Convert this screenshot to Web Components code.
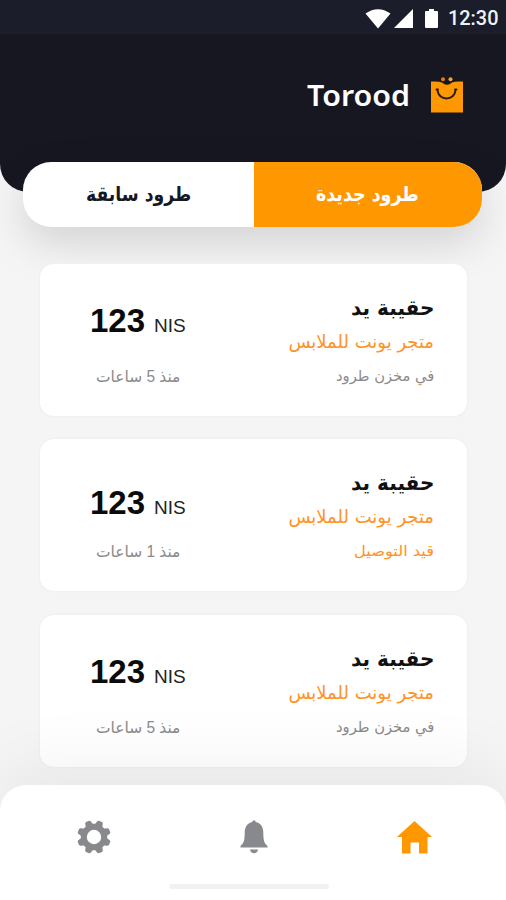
<!DOCTYPE html>
<html lang="ar">
<head>
<meta charset="utf-8">
<meta name="viewport" content="width=device-width, initial-scale=1">
<title>Torood</title>
<style>
  body {
    margin: 0;
    font-family: "DejaVu Sans", "Liberation Sans", sans-serif;
    background: #f5f5f5;
  }
</style>
</head>
<body>
<torood-app></torood-app>
<script>
// One line of text, stretched or squeezed to the width in its attribute
class FitText extends HTMLElement {
  connectedCallback() {
    const rtl = this.getAttribute('dir') === 'rtl';
    this.attachShadow({ mode: 'open' });
    this.shadowRoot.innerHTML = `
      <style>
        :host {
          display: block;
          white-space: nowrap;
          width: ${this.getAttribute('width')}px;
        }
        span {
          display: inline-block;
          transform-origin: ${rtl ? 'right' : 'left'} center;
        }
      </style>
      <span><slot></slot></span>
    `;
    const span = this.shadowRoot.querySelector('span');
    const scale = Number(this.getAttribute('width')) / span.offsetWidth;
    span.style.transform = `scaleX(${scale})`;
  }
}
customElements.define('fit-text', FitText);

class StatusBar extends HTMLElement {
  connectedCallback() {
    this.attachShadow({ mode: 'open' });
    this.shadowRoot.innerHTML = `
      <style>
        :host {
          display: flex;
          align-items: center;
          justify-content: flex-end;
          box-sizing: border-box;
          height: 34px;
          padding: 4px 8px 0 0;
          background: #1b1d2a;
          color: #f2f2f2;
          font: 500 19.500px/30px Roboto, sans-serif;
        }
        svg { display: block; fill: #fff; }
        .signal { margin-left: 3px; }
        .battery { margin: 0 10px 0 12px; }
      </style>
      <svg class="wifi" width="26" height="20" viewBox="0 0 26 20"><path d="M.5 4.500Q13-4 25.500 4.500L13 19.500z"/></svg>
      <svg class="signal" width="19" height="20" viewBox="0 0 19 20"><path d="M19 0v19H0z"/></svg>
      <svg class="battery" width="13" height="20" viewBox="0 0 13 20"><path d="M4 0h5v2h3q1 0 1 1v15q0 1-1 1H1q-1 0-1-1V3q0-1 1-1h3z"/></svg>
      <fit-text width="50">12:30</fit-text>
    `;
  }
}
customElements.define('status-bar', StatusBar);

class AppHeader extends HTMLElement {
  connectedCallback() {
    this.attachShadow({ mode: 'open' });
    this.shadowRoot.innerHTML = `
      <style>
        :host {
          display: flex;
          justify-content: flex-end;
          align-items: flex-start;
          gap: 21px;
          box-sizing: border-box;
          height: 158px;
          padding: 42px 43px 0 0;
          background: #171722;
          border-radius: 0 0 28px 28px;
        }
        fit-text {
          color: #fff;
          font: 600 28px/39px "Noto Sans", sans-serif;
        }
        svg { margin-top: 1px; }
      </style>
      <fit-text width="103">Torood</fit-text>
      <svg width="32" height="37" viewBox="0 0 32 37">
        <path fill="#ff9800" d="M0 4.500Q8 4 11 5.500Q16 10 21 5.500Q24 4 32 4.500V35.500H0z"/>
        <circle cx="12" cy="2.200" r="2" fill="#e9781c"/>
        <circle cx="19.500" cy="2.200" r="2" fill="#f5a623"/>
        <path fill="none" stroke="#2a1d18" stroke-width="1.900" stroke-linecap="round" d="M6.500 12.500C7 24.500 24 24.500 24.500 12.500M5.500 12.500h1.500M24 12.500h1.500"/>
      </svg>
    `;
  }
}
customElements.define('app-header', AppHeader);

class ParcelTabs extends HTMLElement {
  connectedCallback() {
    this.attachShadow({ mode: 'open' });
    this.shadowRoot.innerHTML = `
      <style>
        :host {
          display: grid;
          grid-template-columns: 231px 1fr;
          height: 65px;
          margin: -30px 24px 0 23px;
          border-radius: 28px;
          overflow: hidden;
          position: relative;
          background: #fff;
          box-shadow: 0 16px 44px rgba(0, 0, 0, 0.14);
        }
        div {
          display: flex;
          justify-content: center;
          color: #171722;
          font-size: 20px;
          font-weight: 700;
          line-height: 64px;
        }
        div fit-text { margin-left: 1px; }
        .active { background: #ff9800; color: #fff; }
        .active fit-text { margin: 0 2px 0 0; }
      </style>
      <div><fit-text dir="rtl" width="105">طرود سابقة</fit-text></div>
      <div class="active"><fit-text dir="rtl" width="103">طرود جديدة</fit-text></div>
    `;
  }
}
customElements.define('parcel-tabs', ParcelTabs);

class ParcelCard extends HTMLElement {
  connectedCallback() {
    this.attachShadow({ mode: 'open' });
    this.shadowRoot.innerHTML = `
      <style>
        :host {
          display: grid;
          grid-template-columns: 1fr 1fr;
          box-sizing: border-box;
          height: 152px;
          padding: 0 33px 0 50px;
          background: #fff;
          border-radius: 14px;
          box-shadow: 0 0 0 1.500px #f1f1f1;
        }
        .cost { padding-top: var(--price-top, 37px); }
        .price {
          display: flex;
          align-items: baseline;
          gap: 9px;
          height: 40px;
          font-family: "Liberation Sans", Arial, sans-serif;
          line-height: 40px;
          color: #0b0b0b;
        }
        .price b { font-size: 33px; }
        .price span { font-size: 19px; color: #222; }
        .cost fit-text {
          margin: calc(61px - var(--price-top, 37px)) 0 0 6px;
          color: #8a8a8a;
          font-family: "Liberation Sans", "DejaVu Sans", sans-serif;
          font-size: 16px;
          line-height: 24px;
        }
        .info {
          display: flex;
          flex-direction: column;
          align-items: flex-end;
          padding-top: 28px;
        }
        .title { font-size: 21px; font-weight: 700; line-height: 32px; color: #111; }
        .store { font-size: 18px; line-height: 30px; margin-top: 3px; color: #ff9226; }
        .state { font-size: 15px; line-height: 24px; margin-top: 7px; color: #8a8a8a; }
        :host([moving]) .state { color: #ff9226; }
      </style>
      <div class="cost">
        <div class="price"><b>123</b><span>NIS</span></div>
        <fit-text dir="rtl" width="84">${this.getAttribute('time')}</fit-text>
      </div>
      <div class="info">
        <fit-text class="title" dir="rtl" width="83">حقيبة يد</fit-text>
        <fit-text class="store" dir="rtl" width="146">متجر يونت للملابس</fit-text>
        <fit-text class="state" dir="rtl" width="${this.getAttribute('state-width')}">${this.getAttribute('state')}</fit-text>
      </div>
    `;
  }
}
customElements.define('parcel-card', ParcelCard);

class BottomNav extends HTMLElement {
  connectedCallback() {
    this.attachShadow({ mode: 'open' });
    this.shadowRoot.innerHTML = `
      <style>
        :host {
          display: flex;
          flex-direction: column;
          align-items: center;
          height: 115px;
          background: #fff;
          border-radius: 26px 26px 0 0;
          position: relative;
          box-shadow: 0 -20px 70px rgba(0, 0, 0, 0.06);
        }
        nav {
          display: flex;
          justify-content: space-between;
          align-self: stretch;
          padding: 35px 74px 0 77px;
        }
        svg { display: block; fill: #87898d; }
        .home { fill: #ff9800; }
        .handle {
          width: 160px;
          height: 5px;
          margin-top: 30px;
          margin-right: 8px;
          border-radius: 3px;
          background: #f1f1f1;
        }
      </style>
      <nav>
        <svg width="34" height="34" viewBox="-17 -17 34 34"><path fill-rule="evenodd" d="${gearPath()}"/></svg>
        <svg width="28" height="34" viewBox="0 0 28 34"><path d="M12.300 2a1.700 1.700 0 0 1 3.400 0C20.500 3 23.300 7 23.300 12.500C23.300 20 24 23 27.500 26V27.500H.5V26C4 23 4.700 20 4.700 12.500C4.700 7 7.500 3 12.300 2zM10 29.500h8c-.5 5-7.500 5-8 0z"/></svg>
        <svg class="home" width="35" height="34" viewBox="0 0 35 34"><path d="M17.500 1L35 17H30.500V33.500H22V22.500H13.500V33.500H5V17H0z"/></svg>
      </nav>
      <div class="handle"></div>
    `;
  }
}

// Eight-toothed gear around the origin, with a round hole
function gearPath() {
  const points = [];
  for (let i = 0; i < 8; i++) {
    const mid = (i + 0.5) * 45;
    [[-17, 13.2], [-10, 16.4], [-6, 17], [6, 17], [10, 16.4], [17, 13.2]].forEach(([offset, r]) => {
      const a = (mid + offset) * Math.PI / 180;
      points.push(`${(r * Math.cos(a)).toFixed(2)} ${(r * Math.sin(a)).toFixed(2)}`);
    });
  }
  return `M${points.join('L')}zM7.200 0A7.200 7.200 0 1 0 -7.200 0A7.200 7.200 0 1 0 7.200 0z`;
}
customElements.define('bottom-nav', BottomNav);

class ToroodApp extends HTMLElement {
  connectedCallback() {
    this.attachShadow({ mode: 'open' });
    this.shadowRoot.innerHTML = `
      <style>
        :host {
          display: flex;
          flex-direction: column;
          height: 900px;
          overflow: hidden;
        }
        main {
          flex: 1;
          display: flex;
          flex-direction: column;
          gap: 23.500px;
          padding: 36.500px 39px 0 40px;
        }
        parcel-card { position: relative; }
        .low { --price-top: 44px; }
      </style>
      <status-bar></status-bar>
      <app-header></app-header>
      <parcel-tabs></parcel-tabs>
      <main>
        <parcel-card time="منذ 5 ساعات" state="في مخزن طرود" state-width="98"></parcel-card>
        <parcel-card class="low" moving time="منذ 1 ساعات" state="قيد التوصيل" state-width="80"></parcel-card>
        <parcel-card time="منذ 5 ساعات" state="في مخزن طرود" state-width="98"></parcel-card>
      </main>
      <bottom-nav></bottom-nav>
    `;
  }
}
customElements.define('torood-app', ToroodApp);
</script>
</body>
</html>
